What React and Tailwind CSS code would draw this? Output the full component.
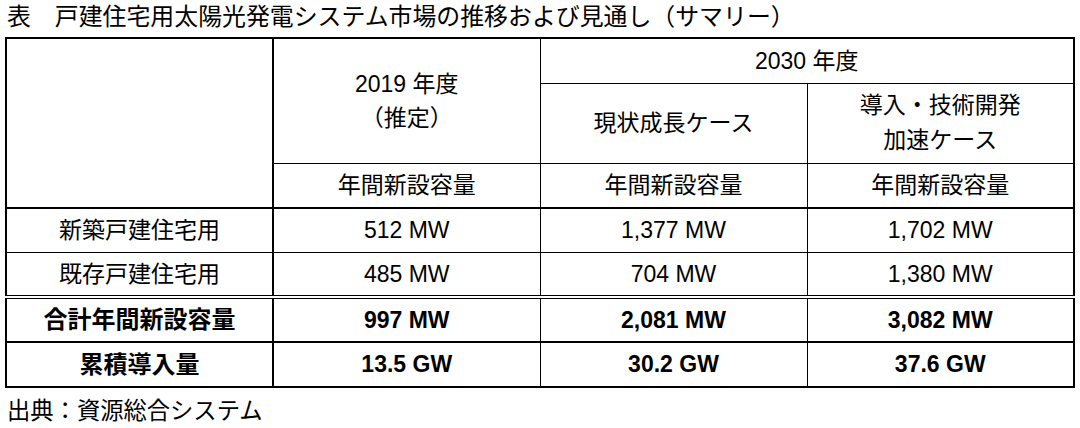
import React from "react";

const font = "font-['Liberation_Sans','Noto_Sans_CJK_JP',sans-serif]";

const body = [
  { label: "新築戸建住宅用", vals: ["512 MW", "1,377 MW", "1,702 MW"], h: "h-[44px]", line: "border-b" },
  { label: "既存戸建住宅用", vals: ["485 MW", "704 MW", "1,380 MW"], h: "h-[45px]", line: "border-b-4 border-double" },
  { label: "合計年間新設容量", vals: ["997 MW", "2,081 MW", "3,082 MW"], h: "h-[45px]", line: "border-b-2", bold: true },
  { label: "累積導入量", vals: ["13.5 GW", "30.2 GW", "37.6 GW"], h: "h-[45px]", line: "", bold: true },
];

export default function App() {
  return (
    <div className={`w-[1080px] h-[428px] bg-white text-black ${font}`}>
      <div className="h-[37px] pl-[7px] pt-[2px] text-[23.9px] leading-[30px]">
        表　戸建住宅用太陽光発電システム市場の推移および見通し（サマリー）
      </div>
      <div className="pl-[5px]">
        <table className="w-[1068px] table-fixed border-collapse border-2 border-black text-center text-[23px]">
          <colgroup>
            <col className="w-[267px]" />
            <col className="w-[267px]" />
            <col className="w-[267px]" />
            <col className="w-[267px]" />
          </colgroup>
          <tbody>
            <tr className="h-[45px]">
              <td rowSpan={3} className="border-r-2 border-b-2 border-black"></td>
              <td rowSpan={2} className="border-r border-black leading-[34px] pt-[1px]">
                <div>2019 年度</div>
                <div>（推定）</div>
              </td>
              <td colSpan={2} className="border-b border-black">2030 年度</td>
            </tr>
            <tr className="h-[80px]">
              <td className="border-r border-black">現状成長ケース</td>
              <td className="leading-[35px]">
                <div>導入・技術開発</div>
                <div>加速ケース</div>
              </td>
            </tr>
            <tr className="h-[45px] border-b-2 border-black">
              <td className="border-t border-r border-black">年間新設容量</td>
              <td className="border-t border-r border-black">年間新設容量</td>
              <td className="border-t border-black">年間新設容量</td>
            </tr>
            {body.map((r) => (
              <tr key={r.label} className={`${r.h} ${r.line} border-black ${r.bold ? "font-bold" : ""}`}>
                <td className={`border-r-2 border-black ${r.bold ? "text-[24px]" : ""}`}>{r.label}</td>
                {r.vals.map((v, i) => (
                  <td key={i} className={i < 2 ? "border-r border-black" : ""}>
                    {v}
                  </td>
                ))}
              </tr>
            ))}
          </tbody>
        </table>
      </div>
      <div className="pl-[7px] pt-[8px] text-[23.3px] leading-[30px]">出典：資源総合システム</div>
    </div>
  );
}
